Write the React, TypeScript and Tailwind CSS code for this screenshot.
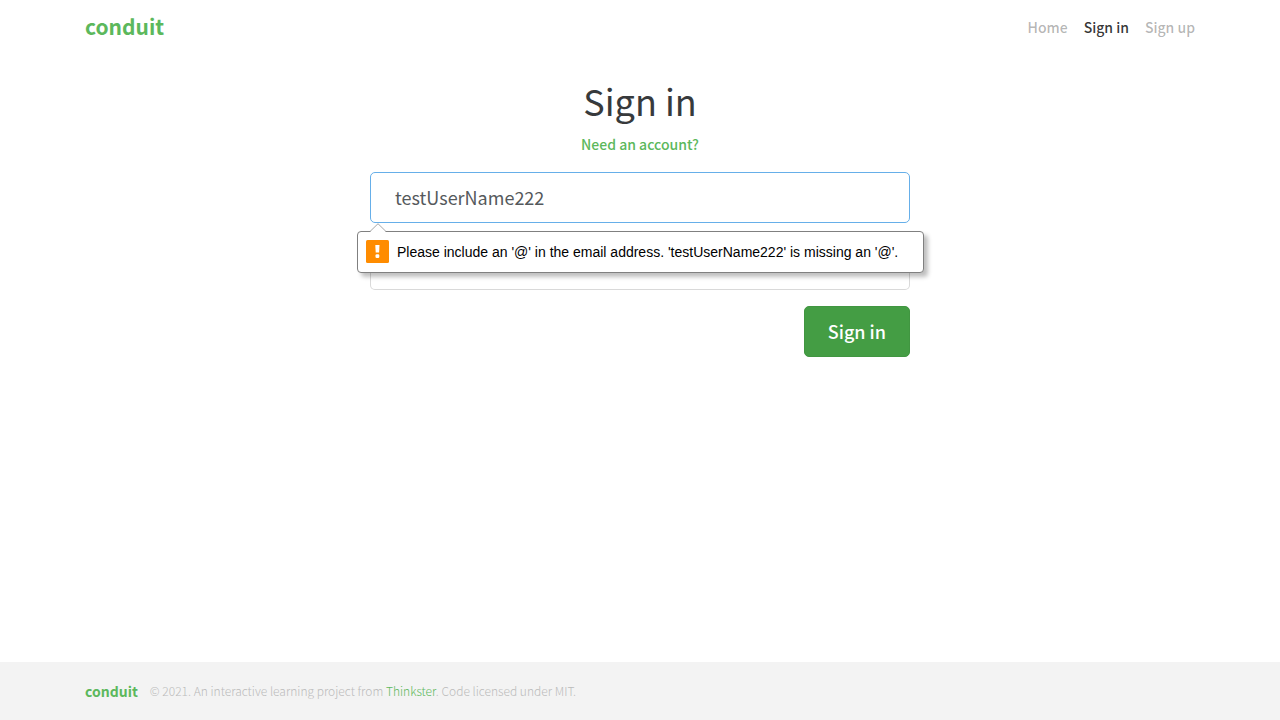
import { useState } from "react";

const navLinks = [
  { label: "Home", active: false },
  { label: "Sign in", active: true },
  { label: "Sign up", active: false },
];

function NavBar() {
  return (
    <nav className="h-[54px]">
      <div className="mx-auto flex h-full max-w-[1140px] items-center justify-between px-[15px]">
        <a
          href="#home"
          className="pb-0.5 text-[21px] leading-8 font-bold text-[#5cb85c]"
        >
          conduit
        </a>
        <ul className="flex gap-4 text-[14px] leading-6 font-medium">
          {navLinks.map((link) => (
            <li key={link.label}>
              <a href="#nav" className={link.active ? "text-black/80" : "text-black/30"}>
                {link.label}
              </a>
            </li>
          ))}
        </ul>
      </div>
    </nav>
  );
}

function ValidationBubble({ value }: { value: string }) {
  return (
    <div
      id="email-error"
      role="alert"
      className="absolute top-full -left-[13px] z-10 mt-2 flex h-[42px] min-w-[567px] items-start gap-2 rounded-[4px] border border-[#808080] bg-white px-2 pt-2 font-['Liberation_Sans',sans-serif] text-[14px] leading-6 whitespace-nowrap text-black shadow-[4px_4px_4px_rgba(0,0,0,0.25)]"
    >
      <svg
        className="absolute -top-[9px] left-3"
        width="17"
        height="10"
        viewBox="0 0 17 10"
        aria-hidden="true"
      >
        <path d="M0 9 L8 0.7 L16 9 V10 H0Z" fill="#fff" />
        <path d="M0 8.5 L8 0.7 L16 8.5" fill="none" stroke="#a6a6a6" />
      </svg>
      <svg width="23" height="23" viewBox="0 0 23 23" aria-hidden="true">
        <rect width="23" height="23" rx="1.5" fill="#ff8c00" />
        <path d="M9.3 5h4.2l-.4 7.6h-3.4z" fill="#fff" />
        <rect x="9.5" y="14.3" width="3.8" height="3.6" rx="1.2" fill="#fff" />
      </svg>
      <span>
        Please include an '@' in the email address. '{value}' is missing an '@'.
      </span>
    </div>
  );
}

function SignInForm() {
  const [email, setEmail] = useState("testUserName222");
  const [password, setPassword] = useState("");
  const field =
    "block h-[51px] w-full rounded-[5px] border bg-white px-6 pb-0.5 text-[18px] leading-6 text-[#55595c] outline-none";

  return (
    <form noValidate className="flex flex-col gap-4" onSubmit={(e) => e.preventDefault()}>
      <div className="relative">
        <input
          type="text"
          inputMode="email"
          aria-label="Email"
          aria-describedby="email-error"
          value={email}
          onChange={(e) => setEmail(e.target.value)}
          className={`${field} border-[#66afe9]`}
        />
        {!email.includes("@") && <ValidationBubble value={email} />}
      </div>
      <input
        type="password"
        aria-label="Password"
        value={password}
        onChange={(e) => setPassword(e.target.value)}
        className={`${field} border-black/15`}
      />
      <button
        type="submit"
        className="h-[51px] self-end rounded-[5px] border border-[#419641] bg-[#449d44] px-[23px] pb-0.5 text-[18px] leading-6 font-medium text-white"
      >
        Sign in
      </button>
    </form>
  );
}

function Footer() {
  return (
    <footer className="mt-auto bg-[#f3f3f3] py-4">
      <div className="mx-auto flex h-[26px] max-w-[1140px] items-center gap-3 px-[15px]">
        <a
          href="#home"
          className="text-[14px] leading-6 font-bold text-[#5cb85c]"
        >
          conduit
        </a>
        <p className="text-[12px] leading-6 font-light text-[#bbbbbb]">
          © 2021. An interactive learning project from{" "}
          <a href="#thinkster" className="text-[#5cb85c]">
            Thinkster
          </a>
          . Code licensed under MIT.
        </p>
      </div>
    </footer>
  );
}

export default function App() {
  return (
    <div className="flex min-h-screen flex-col bg-white font-['Noto_Sans_CJK_SC','Noto_Sans',sans-serif] text-[#373a3c]">
      <NavBar />
      <main className="mx-auto w-full max-w-[570px] px-[15px] pt-6">
        <h1 className="text-center text-[36px] leading-[44px]">Sign in</h1>
        <p className="mt-2.5 mb-4 text-center text-[14px] leading-6 font-medium">
          <a href="#register" className="text-[#5cb85c]">
            Need an account?
          </a>
        </p>
        <SignInForm />
      </main>
      <Footer />
    </div>
  );
}
